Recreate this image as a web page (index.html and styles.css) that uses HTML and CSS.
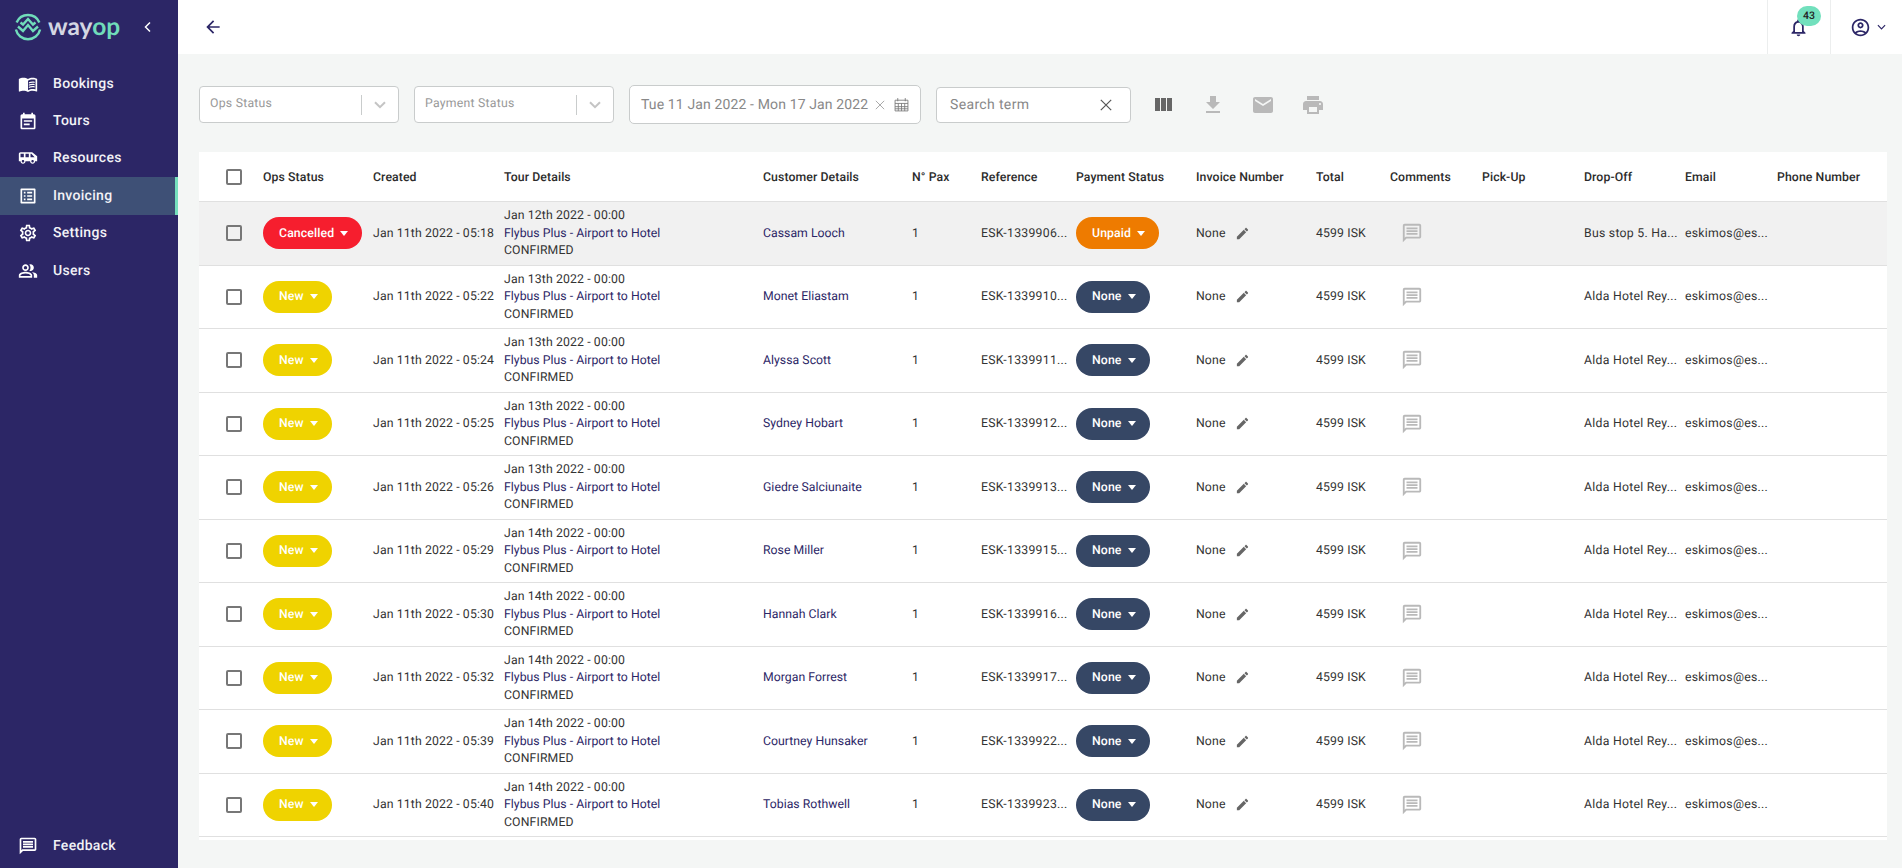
FILE: index.html
```html
<!DOCTYPE html>
<html lang="en">
<head>
    <meta charset="UTF-8">
    <title>Invoicing</title>
    <link rel="stylesheet" href="styles.css">
</head>
<body>
    <svg class="sprite" width="0" height="0">
        <symbol id="i-book" viewBox="0 0 24 24"><path d="M21 5c-1.11-.35-2.33-.5-3.5-.5-1.95 0-4.05.4-5.5 1.5-1.45-1.1-3.55-1.5-5.5-1.5S2.45 4.9 1 6v14.65c0 .25.25.5.5.5.1 0 .15-.05.25-.05C3.1 20.45 5.05 20 6.5 20c1.95 0 4.05.4 5.5 1.5 1.35-.85 3.8-1.5 5.5-1.5 1.65 0 3.35.3 4.75 1.05.1.05.15.05.25.05.25 0 .5-.25.5-.5V6c-.6-.45-1.25-.75-2-1zm0 13.5c-1.1-.35-2.3-.5-3.5-.5-1.7 0-4.15.65-5.5 1.5V8c1.35-.85 3.8-1.5 5.5-1.5 1.2 0 2.4.15 3.5.5v11.5z"/><path d="M17.5 10.5c.88 0 1.73.09 2.5.26V9.24c-.79-.15-1.64-.24-2.5-.24-1.7 0-3.24.29-4.5.83v1.66c1.13-.64 2.7-.99 4.5-.99zM13 12.49v1.66c1.13-.64 2.7-.99 4.5-.99.88 0 1.73.09 2.5.26V11.9c-.79-.15-1.64-.24-2.5-.24-1.7 0-3.24.3-4.5.83zM17.5 14.33c-1.7 0-3.24.29-4.5.83v1.66c1.13-.64 2.7-.99 4.5-.99.88 0 1.73.09 2.5.26v-1.52c-.79-.16-1.64-.24-2.5-.24z"/></symbol>
        <symbol id="i-tours" viewBox="0 0 24 24"><path d="M19 4h-1V2h-2v2H8V2H6v2H5c-1.1 0-2 .9-2 2v14c0 1.1.9 2 2 2h14c1.1 0 2-.9 2-2V6c0-1.1-.9-2-2-2zm0 16H5V9h14v11zM7 11h10v2H7zm0 4h7v2H7z"/></symbol>
        <symbol id="i-van" viewBox="0 0 24 24"><path d="M17 5H3c-1.1 0-2 .89-2 2v9h2c0 1.65 1.34 3 3 3s3-1.35 3-3h5.5c0 1.65 1.34 3 3 3s3-1.35 3-3H23v-6l-6-5zM3 11V7h4v4H3zm3 6.5c-.83 0-1.5-.67-1.5-1.5s.67-1.5 1.5-1.5 1.5.67 1.5 1.5-.67 1.5-1.5 1.5zm7-6.5H9V7h4v4zm4.5 6.5c-.83 0-1.5-.67-1.5-1.5s.67-1.5 1.5-1.5 1.5.67 1.5 1.5-.67 1.5-1.5 1.5zM15 11V7h1l4 4h-5z"/></symbol>
        <symbol id="i-list" viewBox="0 0 24 24"><path d="M19 5v14H5V5h14m1.1-2H3.9c-.5 0-.9.4-.9.9v16.2c0 .4.4.9.9.9h16.2c.4 0 .9-.5.9-.9V3.9c0-.5-.5-.9-.9-.9zM11 7h6v2h-6V7zm0 4h6v2h-6v-2zm0 4h6v2h-6zM7 7h2v2H7zm0 4h2v2H7zm0 4h2v2H7z"/></symbol>
        <symbol id="i-gear" viewBox="0 0 24 24"><path d="M19.43 12.98c.04-.32.07-.64.07-.98 0-.34-.03-.66-.07-.98l2.11-1.65c.19-.15.24-.42.12-.64l-2-3.46c-.09-.16-.26-.25-.44-.25-.06 0-.12.01-.17.03l-2.49 1c-.52-.4-1.08-.73-1.69-.98l-.38-2.65C14.46 2.18 14.25 2 14 2h-4c-.25 0-.46.18-.49.42l-.38 2.65c-.61.25-1.17.59-1.69.98l-2.49-1c-.06-.02-.12-.03-.18-.03-.17 0-.34.09-.43.25l-2 3.46c-.13.22-.07.49.12.64l2.11 1.65c-.04.32-.07.65-.07.98 0 .33.03.66.07.98l-2.11 1.65c-.19.15-.24.42-.12.64l2 3.46c.09.16.26.25.44.25.06 0 .12-.01.17-.03l2.49-1c.52.4 1.08.73 1.69.98l.38 2.65c.03.24.24.42.49.42h4c.25 0 .46-.18.49-.42l.38-2.65c.61-.25 1.17-.59 1.69-.98l2.49 1c.06.02.12.03.18.03.17 0 .34-.09.43-.25l2-3.46c.12-.22.07-.49-.12-.64l-2.11-1.65zm-1.98-1.71c.04.31.05.52.05.73 0 .21-.02.43-.05.73l-.14 1.13.89.7 1.08.84-.7 1.21-1.27-.51-1.04-.42-.9.68c-.43.32-.84.56-1.25.73l-1.06.43-.16 1.13-.2 1.35h-1.4l-.19-1.35-.16-1.13-1.06-.43c-.43-.18-.83-.41-1.23-.71l-.91-.7-1.06.43-1.27.51-.7-1.21 1.08-.84.89-.7-.14-1.13c-.03-.31-.05-.54-.05-.74s.02-.43.05-.73l.14-1.13-.89-.7-1.08-.84.7-1.21 1.27.51 1.04.42.9-.68c.43-.32.84-.56 1.25-.73l1.06-.43.16-1.13.2-1.35h1.39l.19 1.35.16 1.13 1.06.43c.43.18.83.41 1.23.71l.91.7 1.06-.43 1.27-.51.7 1.21-1.07.85-.89.7.14 1.13zM12 8c-2.21 0-4 1.79-4 4s1.79 4 4 4 4-1.79 4-4-1.79-4-4-4zm0 6c-1.1 0-2-.9-2-2s.9-2 2-2 2 .9 2 2-.9 2-2 2z"/></symbol>
        <symbol id="i-users" viewBox="0 0 24 24"><path d="M16.67 13.13C18.04 14.06 19 15.32 19 17v3h4v-3c0-2.18-3.57-3.47-6.33-3.87zM15 12c2.21 0 4-1.79 4-4s-1.79-4-4-4c-.47 0-.91.1-1.33.24C14.5 5.27 15 6.58 15 8s-.5 2.73-1.33 3.76c.42.14.86.24 1.33.24zM9 12c2.21 0 4-1.79 4-4s-1.79-4-4-4-4 1.79-4 4 1.79 4 4 4zm0-6c1.1 0 2 .9 2 2s-.9 2-2 2-2-.9-2-2 .9-2 2-2zM9 13c-2.67 0-8 1.34-8 4v3h16v-3c0-2.66-5.33-4-8-4zm6 5H3v-.99C3.2 16.28 6.3 15 9 15s5.8 1.28 6 2v1z"/></symbol>
        <symbol id="i-chat" viewBox="0 0 24 24"><path d="M20 2H4c-1.1 0-2 .9-2 2v18l4-4h14c1.1 0 2-.9 2-2V4c0-1.1-.9-2-2-2zm0 14H5.17L4 17.17V4h16v12zM6 12h12v2H6zm0-3h12v2H6zm0-3h12v2H6z"/></symbol>
        <symbol id="i-edit" viewBox="0 0 24 24"><path d="M3 17.25V21h3.75L17.81 9.94l-3.75-3.75L3 17.25zM20.71 7.04c.39-.39.39-1.02 0-1.41l-2.34-2.34c-.39-.39-1.02-.39-1.41 0l-1.83 1.83 3.75 3.75 1.83-1.83z"/></symbol>
    </svg>

    <div class="app">
        <aside class="sidebar">
            <div class="brand">
                <svg class="brand-mark" viewBox="0 0 28 28" fill="none" stroke="#70dcba" stroke-width="2.4">
                    <path d="M2.6 9.5A12.4 12.4 0 0 1 25.4 9.5"/>
                    <path d="M1.9 16.5A12.4 12.4 0 0 0 26.1 16.5"/>
                    <path d="M4 13.5l5 4.5 5-6 5 6 5-4.5"/>
                    <path d="M6.5 9.5l2.5 2 5-5.5 5 5.5 2.5-2"/>
                </svg>
                <span class="brand-name">way<span class="brand-accent">op</span></span>
                <svg class="collapse" viewBox="0 0 12 12" fill="none" stroke="#fff" stroke-width="1.5"><path d="M8 1.5L3.5 6 8 10.5"/></svg>
            </div>
            <nav class="nav">
                <a class="nav-item"><svg class="nav-icon"><use href="#i-book"/></svg>Bookings</a>
                <a class="nav-item"><svg class="nav-icon"><use href="#i-tours"/></svg>Tours</a>
                <a class="nav-item"><svg class="nav-icon"><use href="#i-van"/></svg>Resources</a>
                <a class="nav-item active"><svg class="nav-icon"><use href="#i-list"/></svg>Invoicing</a>
                <a class="nav-item"><svg class="nav-icon"><use href="#i-gear"/></svg>Settings</a>
                <a class="nav-item"><svg class="nav-icon"><use href="#i-users"/></svg>Users</a>
            </nav>
            <a class="nav-item feedback"><svg class="nav-icon"><use href="#i-chat"/></svg>Feedback</a>
        </aside>

        <div class="main">
            <header class="topbar">
                <svg class="back" viewBox="0 0 24 24"><path d="M20 11H7.83l5.59-5.59L12 4l-8 8 8 8 1.41-1.41L7.83 13H20v-2z"/></svg>
                <div class="top-cell bell">
                    <svg class="bell-icon" viewBox="0 0 24 24"><path d="M12 22c1.1 0 2-.9 2-2h-4c0 1.1.9 2 2 2zm6-6v-5c0-3.07-1.63-5.64-4.5-6.32V4c0-.83-.67-1.5-1.5-1.5s-1.5.67-1.5 1.5v.68C7.64 5.36 6 7.92 6 11v5l-2 2v1h16v-1l-2-2zm-2 1H8v-6c0-2.48 1.51-4.5 4-4.5s4 2.02 4 4.5v6z"/></svg>
                    <span class="badge">43</span>
                </div>
                <div class="top-cell profile">
                    <svg class="profile-icon" viewBox="0 0 24 24"><path d="M12 2C6.48 2 2 6.48 2 12s4.48 10 10 10 10-4.48 10-10S17.52 2 12 2zM7.35 18.5C8.66 17.56 10.26 17 12 17s3.34.56 4.65 1.5c-1.31.94-2.91 1.5-4.65 1.5s-3.34-.56-4.65-1.5zm10.79-1.38C16.45 15.8 14.32 15 12 15s-4.45.8-6.14 2.12C4.7 15.73 4 13.95 4 12c0-4.42 3.58-8 8-8s8 3.58 8 8c0 1.95-.7 3.73-1.86 5.12zM12 6c-1.93 0-3.5 1.57-3.5 3.5S10.07 13 12 13s3.5-1.57 3.5-3.5S13.93 6 12 6zm0 5c-.83 0-1.5-.67-1.5-1.5S11.17 8 12 8s1.5.67 1.5 1.5S12.83 11 12 11z"/></svg>
                    <svg class="profile-caret" viewBox="0 0 10 6" fill="none" stroke="#2c2666" stroke-width="1.3"><path d="M1 1l4 4 4-4"/></svg>
                </div>
            </header>

            <div class="content">
                <div class="filters">
                    <div class="select">
                        <span class="select-label">Ops Status</span>
                        <span class="select-sep"></span>
                        <svg class="select-caret" viewBox="0 0 12 8" fill="none" stroke="#c4c4c4" stroke-width="2"><path d="M1 1.2l5 5 5-5"/></svg>
                    </div>
                    <div class="select">
                        <span class="select-label">Payment Status</span>
                        <span class="select-sep"></span>
                        <svg class="select-caret" viewBox="0 0 12 8" fill="none" stroke="#c4c4c4" stroke-width="2"><path d="M1 1.2l5 5 5-5"/></svg>
                    </div>
                    <div class="date">
                        <span class="date-text">Tue 11 Jan 2022 - Mon 17 Jan 2022</span>
                        <svg class="date-clear" viewBox="0 0 12 12" fill="none" stroke="#999" stroke-width="1"><path d="M1 1l10 10M11 1L1 11"/></svg>
                        <svg class="date-cal" viewBox="0 0 14 14" fill="none" stroke="#777" stroke-width=".8"><path d="M1 3h12v10H1zM1 6h12M3.5 1v3M10.5 1v3M1 9h12M1 11h12M4 6v7M7 6v7M10 6v7"/></svg>
                    </div>
                    <div class="search">
                        <span class="search-text">Search term</span>
                        <svg class="search-clear" viewBox="0 0 12 12" fill="none" stroke="#555" stroke-width="1.2"><path d="M.8.8l10.4 10.4M11.2.8L.8 11.2"/></svg>
                    </div>
                    <div class="tools">
                        <svg class="tool tool-dark" viewBox="0 0 24 24"><path d="M10 18h5V5h-5v13zm-6 0h5V5H4v13zM16 5v13h5V5h-5z"/></svg>
                        <svg class="tool" viewBox="0 0 24 24"><path d="M19 9h-4V3H9v6H5l7 7 7-7zM5 18v2h14v-2H5z"/></svg>
                        <svg class="tool" viewBox="0 0 24 24"><path d="M20 4H4c-1.1 0-1.99.9-1.99 2L2 18c0 1.1.9 2 2 2h16c1.1 0 2-.9 2-2V6c0-1.1-.9-2-2-2zm0 4l-8 5-8-5V6l8 5 8-5v2z"/></svg>
                        <svg class="tool" viewBox="0 0 24 24"><path d="M19 8H5c-1.66 0-3 1.34-3 3v6h4v4h12v-4h4v-6c0-1.66-1.34-3-3-3zm-3 11H8v-5h8v5zm3-7c-.55 0-1-.45-1-1s.45-1 1-1 1 .45 1 1-.45 1-1 1zm-1-9H6v4h12V3z"/></svg>
                    </div>
                </div>

                <table class="orders">
                    <colgroup>
                        <col class="c-check"><col class="c-ops"><col class="c-created"><col class="c-tour"><col class="c-customer">
                        <col class="c-pax"><col class="c-ref"><col class="c-pay"><col class="c-inv"><col class="c-total">
                        <col class="c-comments"><col class="c-pick"><col class="c-drop"><col class="c-email"><col class="c-phone">
                    </colgroup>
                    <thead>
                        <tr>
                            <th><span class="check"></span></th>
                            <th>Ops Status</th><th>Created</th><th>Tour Details</th><th>Customer Details</th>
                            <th>N° Pax</th><th>Reference</th><th>Payment Status</th><th>Invoice Number</th><th>Total</th>
                            <th>Comments</th><th>Pick-Up</th><th>Drop-Off</th><th>Email</th><th>Phone Number</th>
                        </tr>
                    </thead>
                    <tbody>
                        <tr class="selected">
                            <td><span class="check"></span></td>
                            <td><span class="pill pill-red">Cancelled<i class="caret"></i></span></td>
                            <td>Jan 11th 2022 - 05:18</td>
                            <td>Jan 12th 2022 - 00:00<br><a>Flybus Plus - Airport to Hotel</a><br>CONFIRMED</td>
                            <td><a>Cassam Looch</a></td>
                            <td>1</td><td>ESK-1339906...</td>
                            <td><span class="pill pill-orange">Unpaid<i class="caret"></i></span></td>
                            <td>None<svg class="edit"><use href="#i-edit"/></svg></td>
                            <td>4599 ISK</td>
                            <td><svg class="comment"><use href="#i-chat"/></svg></td>
                            <td></td><td>Bus stop 5. Ha...</td><td>eskimos@es...</td><td></td>
                        </tr>
                        <tr>
                            <td><span class="check"></span></td>
                            <td><span class="pill pill-yellow">New<i class="caret"></i></span></td>
                            <td>Jan 11th 2022 - 05:22</td>
                            <td>Jan 13th 2022 - 00:00<br><a>Flybus Plus - Airport to Hotel</a><br>CONFIRMED</td>
                            <td><a>Monet Eliastam</a></td>
                            <td>1</td><td>ESK-1339910...</td>
                            <td><span class="pill pill-navy">None<i class="caret"></i></span></td>
                            <td>None<svg class="edit"><use href="#i-edit"/></svg></td>
                            <td>4599 ISK</td>
                            <td><svg class="comment"><use href="#i-chat"/></svg></td>
                            <td></td><td>Alda Hotel Rey...</td><td>eskimos@es...</td><td></td>
                        </tr>
                        <tr>
                            <td><span class="check"></span></td>
                            <td><span class="pill pill-yellow">New<i class="caret"></i></span></td>
                            <td>Jan 11th 2022 - 05:24</td>
                            <td>Jan 13th 2022 - 00:00<br><a>Flybus Plus - Airport to Hotel</a><br>CONFIRMED</td>
                            <td><a>Alyssa Scott</a></td>
                            <td>1</td><td>ESK-1339911...</td>
                            <td><span class="pill pill-navy">None<i class="caret"></i></span></td>
                            <td>None<svg class="edit"><use href="#i-edit"/></svg></td>
                            <td>4599 ISK</td>
                            <td><svg class="comment"><use href="#i-chat"/></svg></td>
                            <td></td><td>Alda Hotel Rey...</td><td>eskimos@es...</td><td></td>
                        </tr>
                        <tr>
                            <td><span class="check"></span></td>
                            <td><span class="pill pill-yellow">New<i class="caret"></i></span></td>
                            <td>Jan 11th 2022 - 05:25</td>
                            <td>Jan 13th 2022 - 00:00<br><a>Flybus Plus - Airport to Hotel</a><br>CONFIRMED</td>
                            <td><a>Sydney Hobart</a></td>
                            <td>1</td><td>ESK-1339912...</td>
                            <td><span class="pill pill-navy">None<i class="caret"></i></span></td>
                            <td>None<svg class="edit"><use href="#i-edit"/></svg></td>
                            <td>4599 ISK</td>
                            <td><svg class="comment"><use href="#i-chat"/></svg></td>
                            <td></td><td>Alda Hotel Rey...</td><td>eskimos@es...</td><td></td>
                        </tr>
                        <tr>
                            <td><span class="check"></span></td>
                            <td><span class="pill pill-yellow">New<i class="caret"></i></span></td>
                            <td>Jan 11th 2022 - 05:26</td>
                            <td>Jan 13th 2022 - 00:00<br><a>Flybus Plus - Airport to Hotel</a><br>CONFIRMED</td>
                            <td><a>Giedre Salciunaite</a></td>
                            <td>1</td><td>ESK-1339913...</td>
                            <td><span class="pill pill-navy">None<i class="caret"></i></span></td>
                            <td>None<svg class="edit"><use href="#i-edit"/></svg></td>
                            <td>4599 ISK</td>
                            <td><svg class="comment"><use href="#i-chat"/></svg></td>
                            <td></td><td>Alda Hotel Rey...</td><td>eskimos@es...</td><td></td>
                        </tr>
                        <tr>
                            <td><span class="check"></span></td>
                            <td><span class="pill pill-yellow">New<i class="caret"></i></span></td>
                            <td>Jan 11th 2022 - 05:29</td>
                            <td>Jan 14th 2022 - 00:00<br><a>Flybus Plus - Airport to Hotel</a><br>CONFIRMED</td>
                            <td><a>Rose Miller</a></td>
                            <td>1</td><td>ESK-1339915...</td>
                            <td><span class="pill pill-navy">None<i class="caret"></i></span></td>
                            <td>None<svg class="edit"><use href="#i-edit"/></svg></td>
                            <td>4599 ISK</td>
                            <td><svg class="comment"><use href="#i-chat"/></svg></td>
                            <td></td><td>Alda Hotel Rey...</td><td>eskimos@es...</td><td></td>
                        </tr>
                        <tr>
                            <td><span class="check"></span></td>
                            <td><span class="pill pill-yellow">New<i class="caret"></i></span></td>
                            <td>Jan 11th 2022 - 05:30</td>
                            <td>Jan 14th 2022 - 00:00<br><a>Flybus Plus - Airport to Hotel</a><br>CONFIRMED</td>
                            <td><a>Hannah Clark</a></td>
                            <td>1</td><td>ESK-1339916...</td>
                            <td><span class="pill pill-navy">None<i class="caret"></i></span></td>
                            <td>None<svg class="edit"><use href="#i-edit"/></svg></td>
                            <td>4599 ISK</td>
                            <td><svg class="comment"><use href="#i-chat"/></svg></td>
                            <td></td><td>Alda Hotel Rey...</td><td>eskimos@es...</td><td></td>
                        </tr>
                        <tr>
                            <td><span class="check"></span></td>
                            <td><span class="pill pill-yellow">New<i class="caret"></i></span></td>
                            <td>Jan 11th 2022 - 05:32</td>
                            <td>Jan 14th 2022 - 00:00<br><a>Flybus Plus - Airport to Hotel</a><br>CONFIRMED</td>
                            <td><a>Morgan Forrest</a></td>
                            <td>1</td><td>ESK-1339917...</td>
                            <td><span class="pill pill-navy">None<i class="caret"></i></span></td>
                            <td>None<svg class="edit"><use href="#i-edit"/></svg></td>
                            <td>4599 ISK</td>
                            <td><svg class="comment"><use href="#i-chat"/></svg></td>
                            <td></td><td>Alda Hotel Rey...</td><td>eskimos@es...</td><td></td>
                        </tr>
                        <tr>
                            <td><span class="check"></span></td>
                            <td><span class="pill pill-yellow">New<i class="caret"></i></span></td>
                            <td>Jan 11th 2022 - 05:39</td>
                            <td>Jan 14th 2022 - 00:00<br><a>Flybus Plus - Airport to Hotel</a><br>CONFIRMED</td>
                            <td><a>Courtney Hunsaker</a></td>
                            <td>1</td><td>ESK-1339922...</td>
                            <td><span class="pill pill-navy">None<i class="caret"></i></span></td>
                            <td>None<svg class="edit"><use href="#i-edit"/></svg></td>
                            <td>4599 ISK</td>
                            <td><svg class="comment"><use href="#i-chat"/></svg></td>
                            <td></td><td>Alda Hotel Rey...</td><td>eskimos@es...</td><td></td>
                        </tr>
                        <tr>
                            <td><span class="check"></span></td>
                            <td><span class="pill pill-yellow">New<i class="caret"></i></span></td>
                            <td>Jan 11th 2022 - 05:40</td>
                            <td>Jan 14th 2022 - 00:00<br><a>Flybus Plus - Airport to Hotel</a><br>CONFIRMED</td>
                            <td><a>Tobias Rothwell</a></td>
                            <td>1</td><td>ESK-1339923...</td>
                            <td><span class="pill pill-navy">None<i class="caret"></i></span></td>
                            <td>None<svg class="edit"><use href="#i-edit"/></svg></td>
                            <td>4599 ISK</td>
                            <td><svg class="comment"><use href="#i-chat"/></svg></td>
                            <td></td><td>Alda Hotel Rey...</td><td>eskimos@es...</td><td></td>
                        </tr>
                    </tbody>
                </table>
            </div>
        </div>
    </div>
</body>
</html>
```

FILE: styles.css
```css
body {
    font-family: Roboto, Arial, sans-serif;
    font-size: 12.25px;
    letter-spacing: 0.13px;
    text-rendering: geometricPrecision;
    color: #333;
    margin: 0;
    padding: 0;
    background-color: #f4f6f5;
}

.sprite {
    position: absolute;
}

.app {
    display: flex;
    height: 868px;
    overflow: hidden;
}

/* sidebar */

.sidebar {
    width: 178px;
    flex-shrink: 0;
    display: flex;
    flex-direction: column;
    background-color: #2c2666;
    color: #fff;
}

.brand {
    height: 65px;
    display: flex;
    align-items: flex-start;
    padding: 13px 0 0 14px;
    box-sizing: border-box;
}

.brand-mark {
    width: 28px;
    height: 28px;
}

.brand-name {
    font-family: Lato, sans-serif;
    font-weight: 700;
    font-size: 24.5px;
    line-height: 28px;
    letter-spacing: 0;
    color: #d4d6e2;
    margin-left: 6px;
}

.brand-accent {
    color: #70dcba;
}

.collapse {
    width: 12px;
    height: 12px;
    margin: 8px 0 0 22px;
}

.nav {
    flex: 1;
}

.nav-item {
    height: 37.4px;
    display: flex;
    align-items: center;
    padding-left: 18px;
    box-sizing: border-box;
    font-size: 14px;
    font-weight: 500;
    letter-spacing: 0.3px;
    color: #f2f2f6;
}

.nav-item.active {
    background-color: #3e5076;
    border-right: 3px solid #75e0bd;
}

.feedback {
    margin-bottom: 3px;
}

.nav-icon {
    width: 20px;
    height: 20px;
    margin-right: 15px;
    fill: #fff;
}

/* top bar */

.main {
    flex: 1;
    min-width: 0;
    display: flex;
    flex-direction: column;
}

.topbar {
    height: 54px;
    flex-shrink: 0;
    display: flex;
    align-items: center;
    background-color: #fff;
    padding-left: 25px;
}

.back {
    width: 20px;
    height: 20px;
    fill: #2c2666;
    margin-right: auto;
}

.top-cell {
    height: 54px;
    box-sizing: border-box;
    border-left: 1px solid #eceeee;
    display: flex;
    align-items: center;
    position: relative;
}

.bell {
    width: 63px;
    padding-left: 20px;
}

.bell-icon {
    width: 21px;
    height: 21px;
    fill: #2c2666;
}

.badge {
    position: absolute;
    left: 29px;
    top: 6px;
    width: 24px;
    height: 20px;
    border-radius: 10px;
    background-color: #72e0bd;
    color: #222;
    font-size: 10.5px;
    font-weight: 500;
    line-height: 19px;
    text-align: center;
    letter-spacing: 0;
}

.profile {
    width: 72px;
    padding-left: 19px;
}

.profile-icon {
    width: 21px;
    height: 21px;
    fill: #2c2666;
}

.profile-caret {
    width: 9px;
    height: 6px;
    margin-left: 6px;
}

/* filters */

.content {
    padding: 31px 15px 0 21px;
}

.filters {
    height: 39px;
    display: flex;
    align-items: center;
    margin-bottom: 28px;
}

.select {
    width: 200px;
    height: 37px;
    box-sizing: border-box;
    border: 1px solid #c9cccc;
    border-radius: 4px;
    background-color: #fff;
    display: flex;
    align-items: center;
    padding-left: 10px;
    margin-right: 15px;
}

.select-label {
    flex: 1;
    color: #999;
    margin-top: -4px;
    letter-spacing: 0.25px;
}

.select-sep {
    width: 1px;
    height: 20px;
    background-color: #c9cccc;
    margin-right: 12px;
}

.select-caret {
    width: 12px;
    height: 8px;
    margin-right: 12px;
}

.date {
    width: 292px;
    height: 39px;
    box-sizing: border-box;
    border: 1px solid #c9cccc;
    border-radius: 5px;
    background-color: #fff;
    display: flex;
    align-items: center;
    padding-left: 11px;
    margin-right: 15px;
}

.date-text {
    font-size: 14px;
    color: #888;
    letter-spacing: 0.13px;
    white-space: nowrap;
    margin-top: 1px;
}

.date-clear {
    width: 10px;
    height: 10px;
    margin-left: 7px;
}

.date-cal {
    width: 15px;
    height: 15px;
    margin-left: 9px;
}

.search {
    width: 195px;
    height: 36px;
    box-sizing: border-box;
    border: 1px solid #c9cccc;
    border-radius: 4px;
    background-color: #fff;
    display: flex;
    align-items: center;
    padding-left: 13px;
}

.search-text {
    flex: 1;
    font-size: 14px;
    color: #888;
    letter-spacing: 0.35px;
    margin-top: 1px;
}

.search-clear {
    width: 12px;
    height: 12px;
    margin-right: 18px;
}

.tools {
    display: flex;
    padding-left: 20px;
    gap: 26px;
}

.tool {
    width: 24px;
    height: 24px;
    fill: #b9b9b9;
}

.tool-dark {
    fill: #666;
}

/* table */

.orders {
    width: 1688px;
    table-layout: fixed;
    border-collapse: separate;
    border-spacing: 0;
    background-color: #fff;
    padding-bottom: 3px;
}

.c-check { width: 64px; }
.c-ops { width: 110px; }
.c-created { width: 131px; }
.c-tour { width: 259px; }
.c-customer { width: 149px; }
.c-pax { width: 69px; }
.c-ref { width: 95px; }
.c-pay { width: 120px; }
.c-inv { width: 120px; }
.c-total { width: 74px; }
.c-comments { width: 92px; }
.c-pick { width: 102px; }
.c-drop { width: 101px; }
.c-email { width: 92px; }
.c-phone { width: 110px; }

th, td {
    text-align: left;
    padding: 0;
    border-bottom: 1px solid #e0e0e0;
}

th {
    height: 49px;
    font-weight: 500;
    color: #2b2b2b;
    letter-spacing: 0.1px;
}

td {
    height: 62.5px;
    line-height: 17.5px;
}

/* reference, drop-off and email run a bit wider */
td:nth-child(7), td:nth-child(13), td:nth-child(14) {
    letter-spacing: 0.27px;
}

th:first-child, td:first-child {
    padding-left: 27px;
}

.selected td {
    background-color: #f1f1f1;
}

td a {
    color: #2c2666;
    letter-spacing: 0.03px;
}

.check {
    display: block;
    width: 16px;
    height: 16px;
    box-sizing: border-box;
    border: 2px solid #777;
    border-radius: 2px;
    background-color: #fff;
}

.selected .check {
    background-color: transparent;
}

.pill {
    display: inline-flex;
    align-items: center;
    height: 32px;
    padding: 0 14px 0 16px;
    border-radius: 16px;
    color: #fff;
    font-weight: 500;
    vertical-align: middle;
}

.pill-red { background-color: #f61e2e; }
.pill-yellow { background-color: #efd300; }
.pill-orange { background-color: #ee7b00; }
.pill-navy { background-color: #364765; }

.caret {
    width: 0;
    height: 0;
    margin-left: 6px;
    border-left: 4.5px solid transparent;
    border-right: 4.5px solid transparent;
    border-top: 5px solid #fff;
}

.edit {
    width: 15px;
    height: 15px;
    margin-left: 9px;
    fill: #666;
    vertical-align: -4px;
}

.comment {
    display: block;
    width: 22px;
    height: 22px;
    fill: #b9b9b9;
    margin-left: 11px;
}
```
